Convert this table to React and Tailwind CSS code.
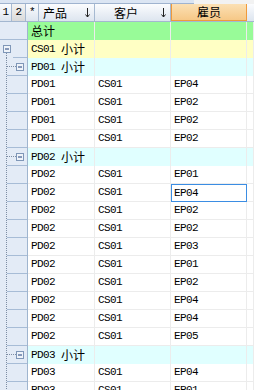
import React from 'react';

const mono = "font-['Liberation_Mono','Noto_Sans_CJK_SC',monospace] text-[11px] tracking-[-0.6px]";
const cjk = "font-['Noto_Sans_CJK_SC',sans-serif] text-[12px] tracking-normal";

const groups = [
  { pd: 'PD01', emps: ['EP04', 'EP02', 'EP02', 'EP02'] },
  { pd: 'PD02', emps: ['EP01', 'EP04', 'EP02', 'EP02', 'EP03', 'EP01', 'EP02', 'EP04', 'EP04', 'EP05'] },
  { pd: 'PD03', emps: ['EP04', 'EP01'] },
];

function buildRows() {
  const rows = [{ kind: 'total' }, { kind: 'g0', label: 'CS01' }];
  groups.forEach((g) => {
    rows.push({ kind: 'g1', label: g.pd });
    g.emps.forEach((e) => rows.push({ kind: 'row', pd: g.pd, cs: 'CS01', ep: e }));
  });
  return rows;
}

function Minus({ x }) {
  return (
    <g>
      <rect x={x + 0.5} y="5.5" width="7" height="7" fill="#eef3f9" stroke="#7f97b8" />
      <line x1={x + 2} y1="9" x2={x + 6} y2="9" stroke="#1f3f7a" />
    </g>
  );
}

// tree lines + collapse buttons on the left of each row
function Gutter({ kind }) {
  const dot = { stroke: '#7d8da4', strokeDasharray: '1 1' };
  return (
    <div className="w-[28px] h-[18px] shrink-0 bg-[#e3ebf6] border-r border-[#9fb5cf]">
      <svg width="27" height="18">
        {kind === 'total' && <line x1="0" y1="17.5" x2="27" y2="17.5" stroke="#a7bcd6" />}
        {kind === 'g0' && (
          <>
            <line x1="6.5" y1="13" x2="6.5" y2="18" {...dot} />
            <line x1="13" y1="17.5" x2="27" y2="17.5" stroke="#a7bcd6" />
            <Minus x={3} />
          </>
        )}
        {kind === 'g1' && (
          <>
            <line x1="6.5" y1="0" x2="6.5" y2="18" {...dot} />
            <line x1="7" y1="8.5" x2="16" y2="8.5" {...dot} />
            <line x1="7" y1="17.5" x2="27" y2="17.5" stroke="#a7bcd6" />
            <Minus x={16} />
          </>
        )}
        {kind === 'row' && (
          <>
            <line x1="6.5" y1="0" x2="6.5" y2="18" {...dot} />
            <line x1="7" y1="17.5" x2="27" y2="17.5" stroke="#a7bcd6" />
          </>
        )}
      </svg>
    </div>
  );
}

function SortArrow() {
  return (
    <svg width="5" height="10" className="shrink-0">
      <line x1="2.5" y1="0" x2="2.5" y2="9" stroke="#222" />
      <path d="M0.5 6.5 L2.5 9 L4.5 6.5" fill="none" stroke="#222" />
    </svg>
  );
}

function Cell({ w, children, line, selected }) {
  const base = selected
    ? 'border border-[#3b8de3] pl-[2px]'
    : `border-r border-[#ececec] pl-[3px] ${line ? 'border-b' : ''}`;
  return (
    <div className={`${w} h-[18px] shrink-0 box-border flex items-center ${base}`}>{children}</div>
  );
}

function Row({ row, index }) {
  const bg =
    row.kind === 'total' ? 'bg-[#98fb98]' : row.kind === 'g0' ? 'bg-[#ffffc4]' : row.kind === 'g1' ? 'bg-[#e0ffff]' : 'bg-white';
  const line = row.kind === 'row';
  let first = null;
  if (row.kind === 'total') first = <span className={cjk}>总计</span>;
  else if (row.kind === 'row') first = row.pd;
  else
    first = (
      <>
        {row.label}
        <span className={`${cjk} ml-[6px]`}>小计</span>
      </>
    );
  return (
    <div className={`flex h-[18px] ${mono} text-black`}>
      <Gutter kind={row.kind} />
      <div className={`flex flex-1 ${bg}`}>
        <Cell w="w-[67px]" line={line}>{first}</Cell>
        <Cell w="w-[76px]" line={line}>{row.cs}</Cell>
        <Cell w="w-[76px]" line={line} selected={index === 9}>{row.ep}</Cell>
        <Cell w="flex-1" line={line} />
      </div>
    </div>
  );
}

export default function App() {
  const rows = buildRows();
  const head = 'bg-linear-to-b from-[#fbfcfe] to-[#dde5ef] border-r border-[#a6b9d1]';
  return (
    <div className="w-[254px] h-[390px] overflow-hidden bg-white">
      <div className="flex h-[4px]">
        <div className="w-[194px] bg-[#dbe5f3] border-b border-[#9fb3cf]" />
        <div className="flex-1 bg-[#f2f2f2]" />
      </div>
      <div className={`flex h-[18px] border-b border-[#a3b7d0] ${mono}`}>
        <div className={`w-[12px] ${head} flex items-center justify-center`}>1</div>
        <div className="w-[14px] bg-linear-to-b from-[#f4f4f4] to-[#d9d9d9] border-r border-[#a6b9d1] flex items-center justify-center">2</div>
        <div className={`w-[13px] ${head} flex items-center justify-center`}>*</div>
        <div className={`w-[56px] ${head} flex items-center pl-[4px] pr-[4px]`}>
          <span className={`${cjk} flex-1`}>产品</span>
          <SortArrow />
        </div>
        <div className={`w-[76px] ${head} flex items-center pl-[19px] pr-[4px]`}>
          <span className={`${cjk} flex-1`}>客户</span>
          <SortArrow />
        </div>
        <div className="w-[76px] box-border bg-linear-to-b from-[#fbe0b4] to-[#f6c887] border border-t-0 border-[#ef9a3c] flex items-center justify-center">
          <span className={cjk}>雇员</span>
        </div>
        <div className="flex-1 bg-linear-to-b from-[#fbfcfe] to-[#dde5ef]" />
      </div>
      {rows.map((r, i) => (
        <Row key={i} row={r} index={i} />
      ))}
    </div>
  );
}
